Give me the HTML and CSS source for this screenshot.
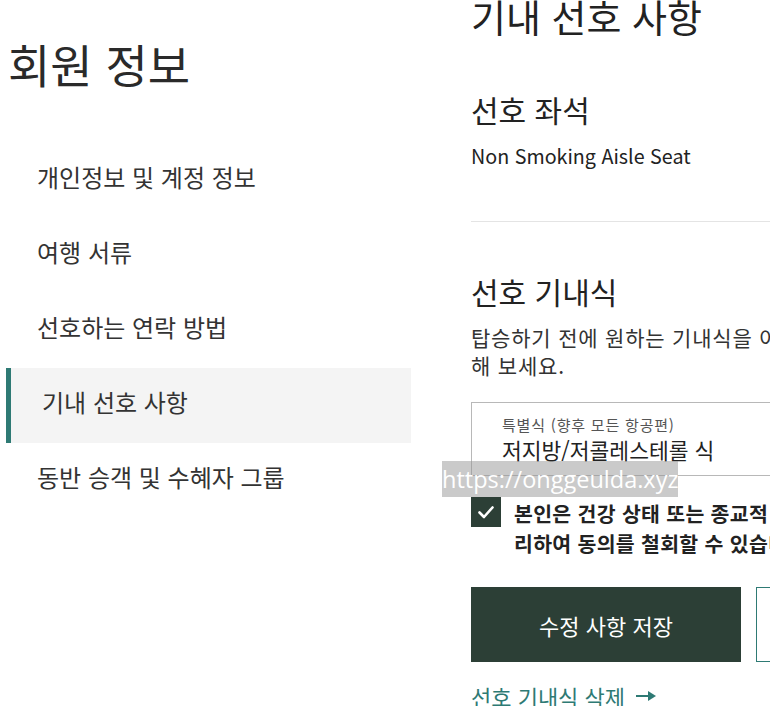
FILE: index.html
```html
<!DOCTYPE html>
<html lang="ko">
<head>
  <meta charset="UTF-8">
  <meta name="viewport" content="width=device-width, initial-scale=1">
  <title>회원 정보 - 기내 선호 사항</title>
  <link rel="stylesheet" href="styles.css">
</head>
<body>
  <div class="page">
    <aside class="sidebar">
      <h1 class="side-title">회원 정보</h1>
      <nav class="side-nav">
        <a href="#">개인정보 및 계정 정보</a>
        <a href="#">여행 서류</a>
        <a href="#">선호하는 연락 방법</a>
        <a href="#" class="active">기내 선호 사항</a>
        <a href="#">동반 승객 및 수혜자 그룹</a>
      </nav>
    </aside>

    <main class="content">
      <h1 class="page-title">기내 선호 사항</h1>

      <section>
        <h2>선호 좌석</h2>
        <p class="seat">Non Smoking Aisle Seat</p>
      </section>

      <hr class="divider">

      <section>
        <h2>선호 기내식</h2>
        <p class="desc">탑승하기 전에 원하는 기내식을 어떤 메뉴로 드실지 미리 선택<br>해 보세요.</p>

        <div class="select-box">
          <span class="select-label">특별식 (향후 모든 항공편)</span>
          <span class="select-value">저지방/저콜레스테롤 식</span>
        </div>

        <label class="consent">
          <span class="checkbox">
            <svg width="30" height="30" viewBox="0 0 30 30"><polyline points="8.5,15.5 13,20 21.5,10.5" fill="none" stroke="#fff" stroke-width="2.6" stroke-linecap="round" stroke-linejoin="round"/></svg>
          </span>
          <span class="consent-text">본인은 건강 상태 또는 종교적 신념에 관한 정보 처리에 동의하며, 언제든지 프로필에서 관<br>리하여 동의를 철회할 수 있습니다.</span>
        </label>

        <div class="actions">
          <button class="btn-primary">수정 사항 저장</button>
          <button class="btn-outline">취소</button>
        </div>

        <a href="#" class="link-delete">선호 기내식 삭제
          <svg width="22" height="12" viewBox="0 0 22 12"><line x1="1" y1="6" x2="14" y2="6" stroke="#2e7a74" stroke-width="2"/><polygon points="13,1 21,6 13,11" fill="#2e7a74"/></svg>
        </a>
      </section>
    </main>
  </div>

  <div class="watermark">https://onggeulda.xyz</div>
</body>
</html>
```

FILE: styles.css
```css
body {
  margin: 0;
  font-family: "Noto Sans CJK KR", "Noto Sans", sans-serif;
  color: #333;
  background: #fff;
  overflow: hidden;
  height: 706px;
}

.page {
  display: flex;
  gap: 60px;
  padding-left: 6px;
}

/* sidebar */
.sidebar { width: 405px; flex-shrink: 0; }
.side-title {
  margin: 37px 0 0 2px;
  font-size: 46px;
  line-height: 52px;
  font-weight: 400;
  color: #2a2a2a;
}
.side-nav { display: flex; flex-direction: column; margin-top: 54px; }
.side-nav a {
  display: block;
  height: 75px;
  line-height: 68px;
  padding-left: 31px;
  font-size: 24px;
  color: #333;
  text-decoration: none;
}
.side-nav a.active {
  background: #f4f4f4;
  border-left: 5px solid #2e7a74;
}

/* content */
.content { width: 640px; flex-shrink: 0; }
.page-title {
  margin: -7px 0 0;
  font-size: 38px;
  line-height: 46px;
  font-weight: 400;
  color: #222;
}
h2 {
  margin: 52px 0 0;
  font-size: 30px;
  line-height: 36px;
  font-weight: 400;
  color: #222;
}
.seat { margin: 16px 0 0; font-size: 19.7px; line-height: 26px; color: #222; }
.divider { margin: 52px 0 0; border: none; border-top: 1px solid #e4e4e4; }
.divider + section h2 { margin-top: 51px; }

.desc {
  margin: 14px 0 0;
  font-size: 21px;
  letter-spacing: 0.8px;
  line-height: 28px;
  color: #333;
  white-space: nowrap;
}

.select-box {
  margin-top: 23px;
  height: 74px;
  box-sizing: border-box;
  border: 1px solid #b8b8b8;
  padding: 11px 30px 0;
  display: flex;
  flex-direction: column;
}
.select-label { font-size: 15px; letter-spacing: 0.8px; line-height: 22px; color: #555; }
.select-value { font-size: 21.5px; line-height: 28px; color: #222; }

.consent { display: flex; gap: 13px; margin-top: 21px; }
.checkbox {
  width: 30px;
  height: 30px;
  flex-shrink: 0;
  background: #2c3f36;
}
.checkbox svg { display: block; }
.consent-text {
  margin-top: 1px;
  font-size: 20.5px;
  letter-spacing: 0.3px;
  line-height: 30px;
  font-weight: 700;
  color: #222;
  white-space: nowrap;
}

.actions { display: flex; gap: 15px; margin-top: 29px; }
.actions button {
  width: 270px;
  height: 75px;
  font-family: inherit;
  font-size: 22px;
}
.btn-primary { background: #2c3f36; color: #fff; border: none; }
.btn-outline { background: #fff; color: #2e7a74; border: 1px solid #2e7a74; }

.link-delete {
  display: inline-flex;
  align-items: center;
  gap: 10px;
  margin-top: 20px;
  font-size: 22px;
  line-height: 28px;
  color: #2e7a74;
  text-decoration: none;
}

.watermark {
  position: absolute;
  left: 442px;
  top: 461px;
  width: 236px;
  height: 36px;
  background: rgba(150, 150, 150, 0.5);
  color: #fff;
  font-family: "Open Sans", sans-serif;
  font-size: 23.5px;
  line-height: 36px;
  white-space: nowrap;
  overflow: hidden;
}
```
